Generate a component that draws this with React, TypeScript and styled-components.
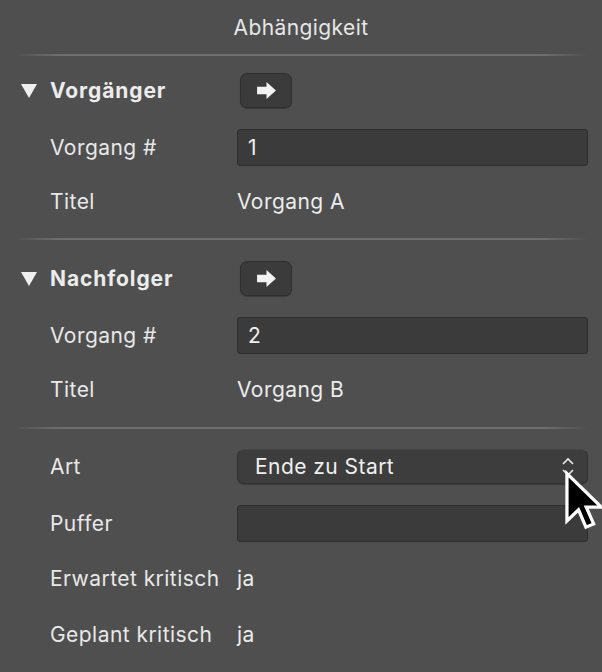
import React from "react";
import styled, { createGlobalStyle } from "styled-components";

const Global = createGlobalStyle`
  html, body { margin: 0; padding: 0; background: #4f4f4f; }
  body { font-family: Inter, "Liberation Sans", sans-serif; color: #e8e8e8; }
  * { box-sizing: border-box; }
`;

const Panel = styled.div`
  position: relative;
  width: 602px;
  height: 672px;
  background: #4f4f4f;
  overflow: hidden;
  display: flex;
  flex-direction: column;
`;

const Title = styled.div`
  height: 54px;
  display: flex;
  align-items: center;
  justify-content: center;
  font-size: 21px;
  letter-spacing: 0.4px;
  padding-top: 1px;
  color: #e6e6e6;
`;

const Separator = styled.div<{ $top?: number }>`
  height: 2px;
  margin: ${(p) => p.$top ?? 0}px 14px 0;
  background: linear-gradient(
    to right,
    rgba(120, 120, 120, 0),
    #6f6f6f 8%,
    #6f6f6f 92%,
    rgba(120, 120, 120, 0)
  );
`;

const Row = styled.div<{ $top: number }>`
  display: grid;
  grid-template-columns: 187px 351px;
  align-items: center;
  height: 38px;
  margin-top: ${(p) => p.$top}px;
  padding-left: 50px;
  font-size: 21px;
  letter-spacing: 0.45px;
  color: #e8e8e8;
`;

const SectionRow = styled(Row)`
  position: relative;
`;

const SectionLabel = styled.div`
  font-weight: 700;
  color: #ececec;
  letter-spacing: 0.9px;
`;

const Disclosure = styled.span`
  position: absolute;
  left: 21px;
  top: 13px;
  width: 0;
  height: 0;
  border-left: 8px solid transparent;
  border-right: 8px solid transparent;
  border-top: 14px solid #f0f0f0;
`;

const ArrowButton = styled.button`
  width: 52px;
  height: 35px;
  margin-left: 3px;
  border-radius: 7px;
  border: 1px solid #2f2f2f;
  background: #3b3b3b;
  box-shadow: 0 1px 1px rgba(0, 0, 0, 0.25);
  display: flex;
  align-items: center;
  justify-content: center;
  padding: 0;
`;

const Label = styled.div``;

const Value = styled.div`
  color: #ececec;
`;

const Field = styled.div`
  height: 37px;
  border: 1px solid #2e2e2e;
  border-radius: 3px;
  background: #3b3b3b;
  display: flex;
  align-items: center;
  padding-left: 10px;
  color: #f0f0f0;
`;

const Select = styled.div`
  position: relative;
  height: 35px;
  border: 1px solid #333;
  border-top-color: #474747;
  border-radius: 7px;
  background: #3d3d3d;
  box-shadow: 0 1px 1px rgba(0, 0, 0, 0.25);
  display: flex;
  align-items: center;
  padding-left: 17px;
  color: #f0f0f0;
`;

const Chevrons = styled.svg`
  position: absolute;
  right: 12px;
  top: 6px;
`;

const Cursor = styled.svg`
  position: absolute;
  left: 564px;
  top: 470px;
`;

function ArrowIcon() {
  return (
    <svg width="21" height="19" viewBox="0 0 20 18">
      <path d="M1 5.5 H10 V1 L19 9 L10 17 V12.5 H1 Z" fill="#f2f2f2" />
    </svg>
  );
}

export default function App() {
  return (
    <Panel>
      <Global />
      <Title>Abhängigkeit</Title>
      <Separator />

      <SectionRow $top={15}>
        <Disclosure />
        <SectionLabel>Vorgänger</SectionLabel>
        <ArrowButton>
          <ArrowIcon />
        </ArrowButton>
      </SectionRow>
      <Row $top={19}>
        <Label>Vorgang #</Label>
        <Field>1</Field>
      </Row>
      <Row $top={16}>
        <Label>Titel</Label>
        <Value>Vorgang A</Value>
      </Row>
      <Separator $top={18} />

      <SectionRow $top={19}>
        <Disclosure />
        <SectionLabel>Nachfolger</SectionLabel>
        <ArrowButton>
          <ArrowIcon />
        </ArrowButton>
      </SectionRow>
      <Row $top={19}>
        <Label>Vorgang #</Label>
        <Field>2</Field>
      </Row>
      <Row $top={16}>
        <Label>Titel</Label>
        <Value>Vorgang B</Value>
      </Row>
      <Separator $top={19} />

      <Row $top={18}>
        <Label>Art</Label>
        <Select>
          Ende zu Start
          <Chevrons width="14" height="22" viewBox="0 0 14 22">
            <path d="M2 8 L7 3 L12 8" stroke="#e8e8e8" strokeWidth="1.6" fill="none" />
            <path d="M2 14 L7 19 L12 14" stroke="#e8e8e8" strokeWidth="1.6" fill="none" />
          </Chevrons>
        </Select>
      </Row>
      <Row $top={19}>
        <Label>Puffer</Label>
        <Field />
      </Row>
      <Row $top={17}>
        <Label>Erwartet kritisch</Label>
        <Value>ja</Value>
      </Row>
      <Row $top={18}>
        <Label>Geplant kritisch</Label>
        <Value>ja</Value>
      </Row>

      <Cursor width="40" height="62" viewBox="0 0 13.5 20.5">
        <path
          d="M1 1 L1 17 L4.9 13.2 L7.4 19.1 L10 18 L7.5 12.3 L12.6 12.3 Z"
          fill="#000"
          stroke="#fff"
          strokeWidth="1.1"
          strokeLinejoin="miter"
        />
      </Cursor>
    </Panel>
  );
}
